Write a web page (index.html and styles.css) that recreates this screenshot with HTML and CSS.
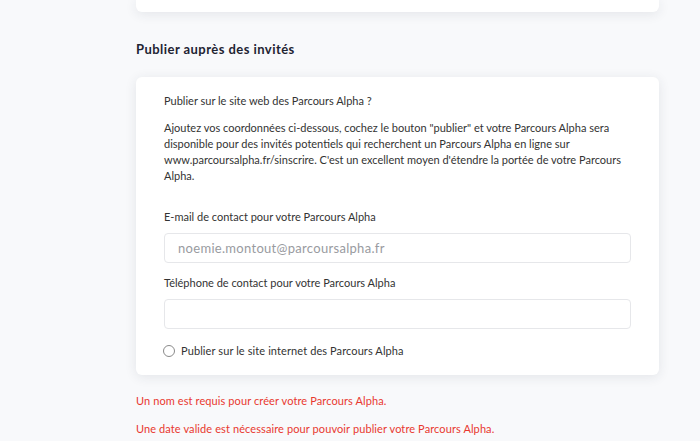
FILE: index.html
```html
<!DOCTYPE html>
<html lang="fr">
<head>
    <meta charset="UTF-8">
    <meta name="viewport" content="width=device-width, initial-scale=1.0">
    <title>Publier auprès des invités</title>
    <link rel="stylesheet" href="styles.css">
</head>
<body>

    <div class="page">
        <div class="card card-top"></div>

        <h2 class="section-title">Publier auprès des invités</h2>

        <div class="card publish-card">
            <p class="question">Publier sur le site web des Parcours Alpha ?</p>
            <p class="intro">Ajoutez vos coordonnées ci-dessous, cochez le bouton "publier" et votre Parcours Alpha sera disponible pour des invités potentiels qui recherchent un Parcours Alpha en ligne sur www.parcoursalpha.fr/sinscrire. C'est un excellent moyen d'étendre la portée de votre Parcours Alpha.</p>

            <label class="field-label" for="email">E-mail de contact pour votre Parcours Alpha</label>
            <input class="field" type="email" id="email" placeholder="noemie.montout@parcoursalpha.fr">

            <label class="field-label label-phone" for="phone">Téléphone de contact pour votre Parcours Alpha</label>
            <input class="field" type="tel" id="phone">

            <label class="radio-row">
                <span class="radio"></span>
                Publier sur le site internet des Parcours Alpha
            </label>
        </div>

        <p class="error error-first">Un nom est requis pour créer votre Parcours Alpha.</p>
        <p class="error">Une date valide est nécessaire pour pouvoir publier votre Parcours Alpha.</p>
    </div>

</body>
</html>
```

FILE: styles.css
```css
body{
    margin: 0;
    background-color: #f8f9fb;
    font-family: "Lato", "Liberation Sans", sans-serif;
    color: #333;
}
.page{
    width: 523px;
    margin-left: 136px;
}
.card{
    background-color: #fff;
    border-radius: 6px;
    box-shadow: rgba(40, 50, 70, 0.10) 0px 2px 12px;
}
.card-top{
    height: 12px;
    border-radius: 0 0 6px 6px;
}
.section-title{
    margin: 29px 0 20px 0;
    font-size: 13px;
    line-height: 16px;
    font-weight: 700;
    letter-spacing: 0.45px;
    color: #1f2433;
}
.publish-card{
    padding: 16px 28px 16px 28px;
    font-size: 11px;
    line-height: 16px;
}
.question{
    margin: 0;
}
.intro{
    margin: 11px 0 0 0;
}
.field-label{
    display: block;
    margin-top: 25px;
}
.label-phone{
    margin-top: 12px;
}
.field{
    display: block;
    box-sizing: border-box;
    width: 100%;
    height: 30px;
    margin-top: 8px;
    padding: 0 13px;
    border: 1px solid #e6e7ea;
    border-radius: 4px;
    font-family: inherit;
    font-size: 13px;
    color: #333;
    outline: none;
}
.field::placeholder{
    color: #999b9f;
    letter-spacing: 0.3px;
}
.radio-row{
    display: flex;
    align-items: center;
    gap: 6px;
    margin-top: 14px;
    margin-left: -1px;
    letter-spacing: 0.1px;
}
.radio{
    box-sizing: border-box;
    width: 12px;
    height: 12px;
    border: 1px solid #8a8a8a;
    border-radius: 50%;
}
.error{
    margin: 12px 0 0 0;
    font-size: 11px;
    line-height: 16px;
    letter-spacing: 0.1px;
    color: #e8382f;
}
.error-first{
    margin-top: 18px;
}
```
